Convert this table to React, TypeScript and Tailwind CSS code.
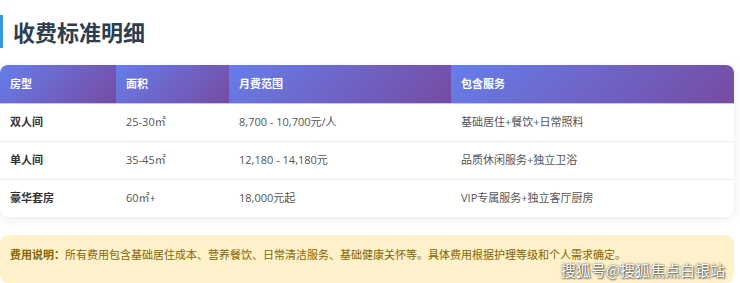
import React from "react"

const rows = [
    { type: "双人间", area: "25-30㎡", price: "8,700 - 10,700元/人", service: "基础居住+餐饮+日常照料" },
    { type: "单人间", area: "35-45㎡", price: "12,180 - 14,180元", service: "品质休闲服务+独立卫浴" },
    { type: "豪华套房", area: "60㎡+", price: "18,000元起", service: "VIP专属服务+独立客厅厨房" },
]

const headers = [
    { label: "房型", w: "w-[116px]" },
    { label: "面积", w: "w-[113px]" },
    { label: "月费范围", w: "w-[222px]" },
    { label: "包含服务", w: "w-[283px]" },
]

export default function App() {
    return (
        <div className="relative w-[740px] h-[283px] overflow-hidden bg-white pr-[6px] font-['Open_Sans','Noto_Sans_CJK_SC',sans-serif]">
            <div className="mt-[15px] h-[33px] border-l-[3px] border-[#3498db] pl-[10px] flex items-center">
                <h2 className="text-[22px] font-bold text-[#2c3e50] leading-none">收费标准明细</h2>
            </div>

            <div className="mt-[17px] rounded-lg overflow-hidden bg-white shadow-[0_2px_12px_rgba(0,0,0,0.08)]">
                <table className="w-[734px] border-collapse table-fixed">
                    <thead>
                        <tr>
                            {headers.map((h) => (
                                <th
                                    key={h.label}
                                    className={`${h.w} h-[38px] px-[10px] text-left text-[11px] font-bold text-white bg-[linear-gradient(135deg,#667eea_0%,#764ba2_100%)] border-b border-[#c9c2ee]`}
                                >
                                    {h.label}
                                </th>
                            ))}
                        </tr>
                    </thead>
                    <tbody>
                        {rows.map((r, i) => (
                            <tr key={r.type} className={i < rows.length - 1 ? "border-b border-[#eeeeee]" : ""}>
                                <td className="h-[38px] px-[10px] text-[11px] font-bold text-[#333333]">{r.type}</td>
                                <td className="px-[10px] text-[11px] text-[#555555]">{r.area}</td>
                                <td className="px-[10px] text-[11px] text-[#555555]">{r.price}</td>
                                <td className="px-[10px] text-[11px] text-[#555555]">{r.service}</td>
                            </tr>
                        ))}
                    </tbody>
                </table>
            </div>

            <div className="mt-[18px] rounded-lg bg-[#fff1c9] px-[10px] pt-[12px] pb-[20px] text-[11px] text-[#856404] leading-[16px]">
                <span className="font-bold">费用说明：</span>
                所有费用包含基础居住成本、营养餐饮、日常清洁服务、基础健康关怀等。具体费用根据护理等级和个人需求确定。
            </div>

            <div className="absolute right-[15px] bottom-[6px] text-[15px] leading-none text-white font-['Noto_Sans_CJK_SC',sans-serif] [text-shadow:0_0_2px_rgba(0,0,0,0.7),1px_1px_2px_rgba(0,0,0,0.6)]">
                搜狐号@搜狐焦点白银站
            </div>
        </div>
    )
}
